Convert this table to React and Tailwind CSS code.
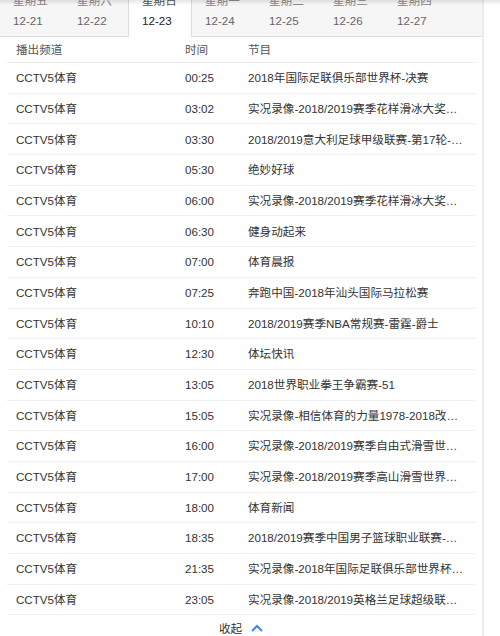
import React from "react";

const tabs = [
  ["星期五", "12-21"],
  ["星期六", "12-22"],
  ["星期日", "12-23"],
  ["星期一", "12-24"],
  ["星期二", "12-25"],
  ["星期三", "12-26"],
  ["星期四", "12-27"],
];

const rows = [
  ["00:25", "2018年国际足联俱乐部世界杯-决赛"],
  ["03:02", "实况录像-2018/2019赛季花样滑冰大奖赛总决赛"],
  ["03:30", "2018/2019意大利足球甲级联赛-第17轮-国际米兰"],
  ["05:30", "绝妙好球"],
  ["06:00", "实况录像-2018/2019赛季花样滑冰大奖赛总决赛"],
  ["06:30", "健身动起来"],
  ["07:00", "体育晨报"],
  ["07:25", "奔跑中国-2018年汕头国际马拉松赛"],
  ["10:10", "2018/2019赛季NBA常规赛-雷霆-爵士"],
  ["12:30", "体坛快讯"],
  ["13:05", "2018世界职业拳王争霸赛-51"],
  ["15:05", "实况录像-相信体育的力量1978-2018改革开放"],
  ["16:00", "实况录像-2018/2019赛季自由式滑雪世界杯"],
  ["17:00", "实况录像-2018/2019赛季高山滑雪世界杯-男子大回转"],
  ["18:00", "体育新闻"],
  ["18:35", "2018/2019赛季中国男子篮球职业联赛-第20轮"],
  ["21:35", "实况录像-2018年国际足联俱乐部世界杯-决赛"],
  ["23:05", "实况录像-2018/2019英格兰足球超级联赛-第17轮"],
];

export default function App() {
  return (
    <div
      className="relative w-[500px] h-[636px] overflow-hidden bg-white text-[11.6px] text-[#333]"
      style={{ fontFamily: '"Liberation Sans", Arial, "Noto Sans CJK SC", sans-serif' }}
    >
      <div className="w-[484px] h-full border-r-2 border-[#ececec]">
        <div className="flex h-[37px] bg-[#f6f6f6] border-b border-[#dddddd]">
          {tabs.map(([d, date], i) => {
            const active = i === 2;
            return (
              <div
                key={date}
                className={
                  active
                    ? "w-[64px] h-[37px] bg-white border-x border-[#dddddd] pl-[13px] overflow-hidden"
                    : "w-[64px] h-[36px] pl-[13px] overflow-hidden"
                }
              >
                <div className="-mt-[9px] leading-[20px]">
                  <div className={active ? "text-[#555]" : "text-[#888]"}>{d}</div>
                  <div className={active ? "text-[#222]" : "text-[#666]"}>{date}</div>
                </div>
              </div>
            );
          })}
        </div>
        <div className="mx-[7px] w-[468px]">
          <div className="flex h-[26px] items-center border-b border-[#ebebeb] text-[#555]">
            <div className="w-[169px] pl-[9px]">播出频道</div>
            <div className="w-[63px] pl-[9px]">时间</div>
            <div className="flex-1 pl-[9px]">节目</div>
          </div>
          {rows.map(([t, p], i) => (
            <div key={i} className="flex h-[30.7px] items-center border-b border-[#f0f0f0]">
              <div className="w-[169px] pl-[9px]">CCTV5体育</div>
              <div className="w-[63px] pl-[9px]">{t}</div>
              <div className="w-[226px] min-w-0 pl-[9px] truncate">{p}</div>
            </div>
          ))}
        </div>
        <div className="flex h-[26px] items-center justify-center gap-[9px]">
          <span className="text-[#333]">收起</span>
          <svg width="12" height="8" viewBox="0 0 12 8">
            <polyline points="1,7 6,2 11,7" fill="none" stroke="#3b86f7" strokeWidth="2" />
          </svg>
        </div>
      </div>
      <div className="absolute left-0 top-0 w-full h-[5px] bg-gradient-to-b from-[rgba(0,0,0,0.10)] to-transparent" />
    </div>
  );
}
